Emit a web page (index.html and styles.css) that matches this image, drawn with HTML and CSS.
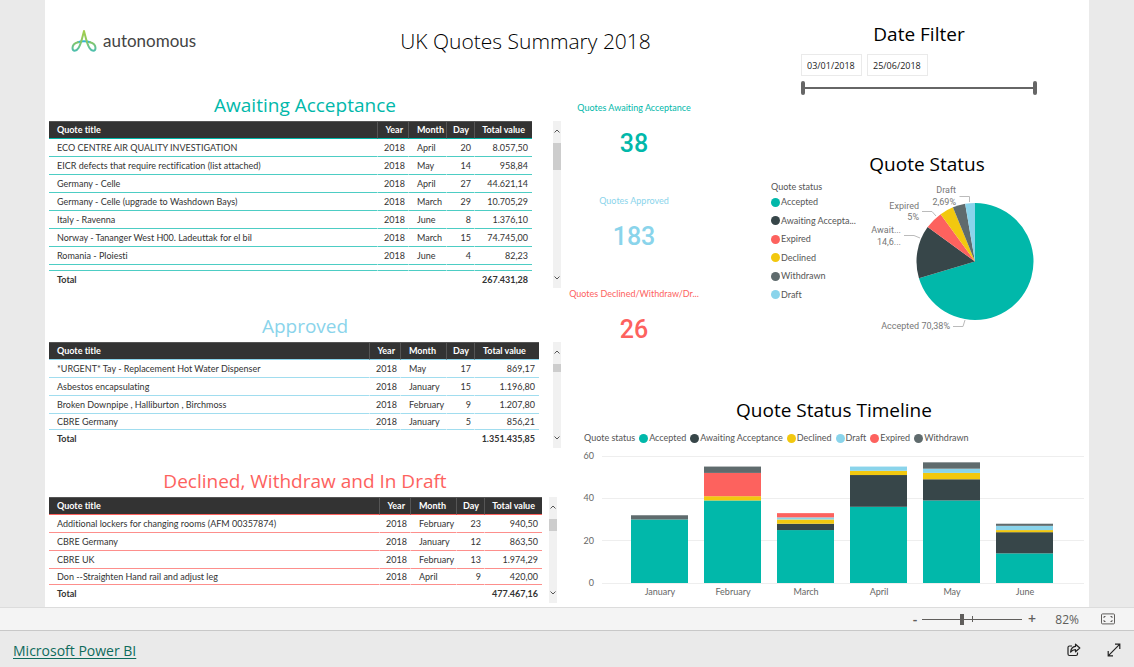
FILE: index.html
```
<!DOCTYPE html>
<html lang="en">
<head>
<meta charset="utf-8">
<title>UK Quotes Summary 2018</title>
<link rel="stylesheet" href="styles.css">
</head>
<body>
<main class="report">
  <header class="masthead">
    <div class="brand">
      <svg class="brand-mark" width="26" height="24" viewBox="0 0 26 24" fill="none" stroke-width="2" stroke-linecap="round" stroke-linejoin="round" aria-hidden="true">
        <defs>
          <linearGradient id="leaf" gradientUnits="userSpaceOnUse" x1="0" y1="1" x2="0" y2="22">
            <stop offset="0" stop-color="#a5cf4c"/><stop offset="0.55" stop-color="#8ac763"/><stop offset="1" stop-color="#4dbfae"/>
          </linearGradient>
        </defs>
        <path d="M7 13.200C10 12 16 12 19 13.200" stroke="#35b6d6"/>
        <path d="M13 2C11.500 7 10.500 14 7.500 19C5.500 22.500 1.500 22.500 1.500 19C1.500 16 4 14 7 13.200M13 2C14.500 7 15.500 14 18.500 19C20.500 22.500 24.500 22.500 24.500 19C24.500 16 22 14 19 13.200" stroke="url(#leaf)"/>
      </svg>
      <span class="brand-name">autonomous</span>
    </div>
    <h1 class="title">UK Quotes Summary 2018</h1>
  </header>

  <section class="filter">
    <h2 class="heading">Date Filter</h2>
    <div class="dates">
      <input class="date" type="text" value="03/01/2018" aria-label="Start date">
      <input class="date" type="text" value="25/06/2018" aria-label="End date">
    </div>
    <div class="span">
      <input class="span-range" type="range" min="0" max="100" value="0" aria-label="Range start">
      <input class="span-range" type="range" min="0" max="100" value="100" aria-label="Range end">
    </div>
  </section>

  <div class="lists">
    <section class="list awaiting">
      <h2 class="heading list-heading">Awaiting Acceptance</h2>
      <div class="list-body">
        <table class="grid">
          <colgroup><col><col class="c31"><col class="c38"><col class="c28"><col class="c58"></colgroup>
          <thead><tr><th>Quote title</th><th class="num">Year</th><th>Month</th><th class="num">Day</th><th class="num">Total value</th></tr></thead>
          <tbody>
            <tr><td>ECO CENTRE AIR QUALITY INVESTIGATION</td><td class="num">2018</td><td>April</td><td class="num">20</td><td class="num">8.057,50</td></tr>
            <tr><td>EICR defects that require rectification (list attached)</td><td class="num">2018</td><td>May</td><td class="num">14</td><td class="num">958,84</td></tr>
            <tr><td>Germany - Celle</td><td class="num">2018</td><td>April</td><td class="num">27</td><td class="num">44.621,14</td></tr>
            <tr><td>Germany - Celle (upgrade to Washdown Bays)</td><td class="num">2018</td><td>March</td><td class="num">29</td><td class="num">10.705,29</td></tr>
            <tr><td>Italy - Ravenna</td><td class="num">2018</td><td>June</td><td class="num">8</td><td class="num">1.376,10</td></tr>
            <tr><td>Norway - Tananger West H00. Ladeuttak for el bil</td><td class="num">2018</td><td>March</td><td class="num">15</td><td class="num">74.745,00</td></tr>
            <tr><td>Romania - Ploiesti</td><td class="num">2018</td><td>June</td><td class="num">4</td><td class="num">82,23</td></tr>
            <tr class="peek"><td></td><td></td><td></td><td></td><td></td></tr>
          </tbody>
          <tfoot><tr><td>Total</td><td class="num" colspan="4">267.431,28</td></tr></tfoot>
        </table>
        <div class="scroll">
          <svg class="arrow" viewBox="0 0 8 6"><path d="M1.500 4.500L4 2L6.500 4.500"/></svg>
          <div class="thumb thumb-tall"></div>
          <svg class="arrow arrow-end" viewBox="0 0 8 6"><path d="M1.500 1.500L4 4L6.500 1.500"/></svg>
        </div>
      </div>
    </section>

    <section class="list approved">
      <h2 class="heading list-heading">Approved</h2>
      <div class="list-body">
        <table class="grid clipped">
          <colgroup><col><col class="c31"><col class="c46"><col class="c28"><col class="c65"></colgroup>
          <thead><tr><th>Quote title</th><th class="num">Year</th><th>Month</th><th class="num">Day</th><th>Total value</th></tr></thead>
          <tbody>
            <tr><td>*URGENT* Tay - Replacement Hot Water Dispenser</td><td class="num">2018</td><td>May</td><td class="num">17</td><td class="num">869,17</td></tr>
            <tr><td>Asbestos encapsulating</td><td class="num">2018</td><td>January</td><td class="num">15</td><td class="num">1.196,80</td></tr>
            <tr><td>Broken Downpipe , Halliburton , Birchmoss</td><td class="num">2018</td><td>February</td><td class="num">9</td><td class="num">1.207,80</td></tr>
            <tr><td>CBRE Germany</td><td class="num">2018</td><td>January</td><td class="num">5</td><td class="num">856,21</td></tr>
          </tbody>
          <tfoot><tr><td>Total</td><td class="num" colspan="4">1.351.435,85</td></tr></tfoot>
        </table>
        <div class="scroll">
          <svg class="arrow" viewBox="0 0 8 6"><path d="M1.500 4.500L4 2L6.500 4.500"/></svg>
          <div class="thumb thumb-short"></div>
          <svg class="arrow arrow-end" viewBox="0 0 8 6"><path d="M1.500 1.500L4 4L6.500 1.500"/></svg>
        </div>
      </div>
    </section>

    <section class="list declined">
      <h2 class="heading list-heading">Declined, Withdraw and In Draft</h2>
      <div class="list-body">
        <table class="grid clipped">
          <colgroup><col><col class="c31"><col class="c46"><col class="c28"><col class="c58"></colgroup>
          <thead><tr><th>Quote title</th><th class="num">Year</th><th>Month</th><th class="num">Day</th><th class="num">Total value</th></tr></thead>
          <tbody>
            <tr><td>Additional lockers for changing rooms (AFM 00357874)</td><td class="num">2018</td><td>February</td><td class="num">23</td><td class="num">940,50</td></tr>
            <tr><td>CBRE Germany</td><td class="num">2018</td><td>January</td><td class="num">12</td><td class="num">863,50</td></tr>
            <tr><td>CBRE UK</td><td class="num">2018</td><td>February</td><td class="num">13</td><td class="num">1.974,29</td></tr>
            <tr><td>Don --Straighten Hand rail and adjust leg</td><td class="num">2018</td><td>April</td><td class="num">9</td><td class="num">420,00</td></tr>
          </tbody>
          <tfoot><tr><td>Total</td><td class="num" colspan="4">477.467,16</td></tr></tfoot>
        </table>
        <div class="scroll">
          <svg class="arrow" viewBox="0 0 8 6"><path d="M1.500 4.500L4 2L6.500 4.500"/></svg>
          <div class="thumb thumb-mid"></div>
          <svg class="arrow arrow-end" viewBox="0 0 8 6"><path d="M1.500 1.500L4 4L6.500 1.500"/></svg>
        </div>
      </div>
    </section>
  </div>

  <section class="kpis">
    <div class="kpi awaiting"><div class="kpi-label">Quotes Awaiting Acceptance</div><div class="kpi-value">38</div></div>
    <div class="kpi approved"><div class="kpi-label">Quotes Approved</div><div class="kpi-value">183</div></div>
    <div class="kpi declined"><div class="kpi-label">Quotes Declined/Withdraw/Dr...</div><div class="kpi-value">26</div></div>
  </section>

  <section class="status">
    <h2 class="heading">Quote Status</h2>
    <div class="status-body">
      <div class="status-legend">
        <div class="legend-title">Quote status</div>
        <ul class="keys keys-column">
          <li class="key"><i class="dot accepted"></i>Accepted</li>
          <li class="key"><i class="dot waiting"></i>Awaiting Accepta...</li>
          <li class="key"><i class="dot expired"></i>Expired</li>
          <li class="key"><i class="dot refused"></i>Declined</li>
          <li class="key"><i class="dot withdrawn"></i>Withdrawn</li>
          <li class="key"><i class="dot draft"></i>Draft</li>
        </ul>
      </div>
      <svg class="pie" width="180" height="155" viewBox="0 0 180 155" role="img" aria-label="Quote status shares">
        <g transform="translate(110 81.500)">
          <path class="fill-accepted" d="M0 0V-58.500A58.500 58.500 0 1 1 -56.050 16.750Z"/>
          <path class="fill-waiting" d="M0 0L-56.050 16.750A58.500 58.500 0 0 1 -47.330 -34.390Z"/>
          <path class="fill-expired" d="M0 0L-47.330 -34.390A58.500 58.500 0 0 1 -34.390 -47.330Z"/>
          <path class="fill-refused" d="M0 0L-34.390 -47.330A58.500 58.500 0 0 1 -22.060 -54.180Z"/>
          <path class="fill-withdrawn" d="M0 0L-22.060 -54.180A58.500 58.500 0 0 1 -9.850 -57.660Z"/>
          <path class="fill-draft" d="M0 0L-9.850 -57.660A58.500 58.500 0 0 1 0 -58.500Z"/>
        </g>
        <g class="leader">
          <path d="M94.500 16.500H104.500V22"/>
          <path d="M57 31.500H67L71 36"/>
          <path d="M39 55.500H49L55 58"/>
          <path d="M88 146.500H98L100 140"/>
        </g>
        <g class="pie-text" text-anchor="end">
          <text x="91" y="13">Draft</text><text x="91" y="25">2,69%</text>
          <text x="54" y="29">Expired</text><text x="54" y="40">5%</text>
          <text x="36" y="53">Await...</text><text x="36" y="65">14,6...</text>
          <text x="85" y="149">Accepted 70,38%</text>
        </g>
      </svg>
    </div>
  </section>

  <section class="timeline">
    <h2 class="heading">Quote Status Timeline</h2>
    <ul class="keys keys-row">
      <li class="key legend-title">Quote status</li>
      <li class="key"><i class="dot accepted"></i>Accepted</li>
      <li class="key"><i class="dot waiting"></i>Awaiting Acceptance</li>
      <li class="key"><i class="dot refused"></i>Declined</li>
      <li class="key"><i class="dot draft"></i>Draft</li>
      <li class="key"><i class="dot expired"></i>Expired</li>
      <li class="key"><i class="dot withdrawn"></i>Withdrawn</li>
    </ul>
    <svg class="bars" viewBox="0 0 524 157" role="img" aria-label="Quotes per month by status">
      <path class="rule" d="M37 6.500H519M37 48.500H519M37 90.500H519M37 133.500H519"/>
      <g class="axis" text-anchor="end">
        <text x="29" y="9">60</text><text x="29" y="51">40</text><text x="29" y="94">20</text><text x="29" y="136">0</text>
      </g>
      <!-- One unit of height is one quote -->
      <g transform="translate(66 133) scale(1 -2.117)">
        <rect class="fill-accepted" x="0" y="0" width="57" height="30"/>
        <rect class="fill-withdrawn" x="0" y="30" width="57" height="2"/>

        <rect class="fill-accepted" x="73" y="0" width="57" height="39"/>
        <rect class="fill-refused" x="73" y="39" width="57" height="2"/>
        <rect class="fill-expired" x="73" y="41" width="57" height="11"/>
        <rect class="fill-withdrawn" x="73" y="52" width="57" height="3"/>

        <rect class="fill-accepted" x="146" y="0" width="57" height="25"/>
        <rect class="fill-waiting" x="146" y="25" width="57" height="3"/>
        <rect class="fill-refused" x="146" y="28" width="57" height="2"/>
        <rect class="fill-draft" x="146" y="30" width="57" height="1"/>
        <rect class="fill-expired" x="146" y="31" width="57" height="2"/>

        <rect class="fill-accepted" x="219" y="0" width="57" height="36"/>
        <rect class="fill-waiting" x="219" y="36" width="57" height="15"/>
        <rect class="fill-refused" x="219" y="51" width="57" height="2"/>
        <rect class="fill-draft" x="219" y="53" width="57" height="2"/>

        <rect class="fill-accepted" x="292" y="0" width="57" height="39"/>
        <rect class="fill-waiting" x="292" y="39" width="57" height="10"/>
        <rect class="fill-refused" x="292" y="49" width="57" height="3"/>
        <rect class="fill-draft" x="292" y="52" width="57" height="2"/>
        <rect class="fill-withdrawn" x="292" y="54" width="57" height="3"/>

        <rect class="fill-accepted" x="365" y="0" width="57" height="14"/>
        <rect class="fill-waiting" x="365" y="14" width="57" height="10"/>
        <rect class="fill-refused" x="365" y="24" width="57" height="1"/>
        <rect class="fill-draft" x="365" y="25" width="57" height="2"/>
        <rect class="fill-withdrawn" x="365" y="27" width="57" height="1"/>
      </g>
      <g class="axis" text-anchor="middle">
        <text x="95" y="145">January</text><text x="168" y="145">February</text><text x="241" y="145">March</text>
        <text x="314" y="145">April</text><text x="387" y="145">May</text><text x="460" y="145">June</text>
      </g>
    </svg>
  </section>
</main>

<div class="zoombar">
  <button class="zoom-step" type="button" aria-label="Zoom out">-</button>
  <input class="zoom-range" type="range" min="0" max="100" value="40" aria-label="Zoom">
  <button class="zoom-step zoom-in" type="button" aria-label="Zoom in">+</button>
  <span class="zoom-value">82%</span>
  <button class="icon-button" type="button" aria-label="Fit to page">
    <svg width="14" height="12" viewBox="0 0 14 12" fill="none" stroke="#605e5c"><rect x="0.500" y="0.900" width="13" height="10" rx="1"/><path d="M3 5V3.500H4.500M9.500 3.500H11V5M11 7V8.500H9.500M4.500 8.500H3V7"/></svg>
  </button>
</div>

<footer class="footer">
  <a class="footer-link" href="#">Microsoft Power BI</a>
  <button class="icon-button" type="button" aria-label="Share">
    <svg width="14" height="14" viewBox="0 0 14 14" fill="none" stroke="#222" stroke-width="1.200" stroke-linejoin="round"><path d="M5 3H2.500Q1 3 1 4.500V11Q1 12.500 2.500 12.500H9Q10.500 12.500 10.500 11V9.500"/><path d="M8.500 1.200L12.800 5L8.500 8.800V6.700C6.500 6.700 5 7.300 3.600 9C4 5.500 5.800 3.600 8.500 3.400Z"/></svg>
  </button>
  <button class="icon-button" type="button" aria-label="Full screen">
    <svg width="14" height="14" viewBox="0 0 14 14" fill="none" stroke="#222" stroke-width="1.200"><path d="M1.200 12.800L12.800 1.200M8 1.200H12.800V6M1.200 8V12.800H6"/></svg>
  </button>
</footer>
</body>
</html>
```
FILE: styles.css
```
* { box-sizing: border-box; }
body {
  margin: 0;
  min-height: 100vh;
  display: flex;
  flex-direction: column;
  background: #eaeaea;
  color: #333;
  font-family: Lato, "Open Sans", sans-serif;
  font-size: 9px;
  font-variant-ligatures: none;
}
h1, h2, ul { margin: 0; padding: 0; font-weight: 400; }
ul { list-style: none; }
button { border: 0; padding: 0; background: none; font: inherit; color: inherit; }

.report {
  flex: 1;
  margin: 0 45px;
  background: #fff;
  display: grid;
  grid-template-columns: 520fr 160fr 364fr;
  grid-template-rows: 92px 304px auto;
  grid-template-areas:
    "masthead masthead filter"
    "lists kpis status"
    "lists timeline timeline";
}
.heading { font-family: "Open Sans", sans-serif; font-size: 19px; line-height: 28px; text-align: center; color: #000; }

.masthead { grid-area: masthead; display: flex; gap: 204px; padding: 26px 0 0 26px; }
.brand { display: flex; gap: 6px; height: 30px; align-items: center; }
.brand-mark { margin-top: -1px; }
.brand-name { font-family: Lato, sans-serif; font-size: 17px; line-height: 20px; color: #444; }
.title { font-family: "Open Sans", sans-serif; font-size: 21px; line-height: 30px; font-weight: 300; color: #000; white-space: nowrap; }

.filter { grid-area: filter; padding: 20px 52px 0 76px; }
.dates { display: flex; gap: 5px; margin-top: 6px; }
.date {
  width: 61px; height: 22px;
  border: 1px solid #eaeaea;
  padding: 0 0 0 5px;
  font: 9px "Open Sans", sans-serif;
  color: #222;
}
.span { position: relative; height: 14px; margin-top: 5px; background: linear-gradient(#666, #666) center / 100% 2px no-repeat; }
.span-range {
  position: absolute; inset: 0;
  width: 100%; height: 14px; margin: 0;
  appearance: none; background: none; pointer-events: none;
}
.span-range::-webkit-slider-thumb {
  appearance: none; width: 4px; height: 14px;
  border-radius: 2px; background: #666; pointer-events: auto;
}

.lists { grid-area: lists; padding: 0 4px; display: flex; flex-direction: column; }
.list-heading { line-height: 26px; margin-bottom: 3px; }
.list.approved { margin-top: 24px; }
.list.declined { margin-top: 20px; }
.list-body { display: flex; justify-content: space-between; }
.awaiting { --tone: #01b8aa; --line: #4dcdc4; }
.approved { --tone: #8ad4eb; --line: #a1ddef; }
.declined { --tone: #fd625e; --line: #fd8f8c; }
.list-heading { color: var(--tone); }
.awaiting .list-body { gap: 21px; }
.approved .list-body { gap: 14px; }
.declined .list-body { gap: 7px; padding-right: 4px; }

.grid { flex: 1; width: 100%; min-width: 0; table-layout: fixed; border-collapse: separate; border-spacing: 0; align-self: flex-start; }
.c28 { width: 28px; }
.c31 { width: 31px; }
.c38 { width: 38px; }
.c46 { width: 46px; }
.c58 { width: 58px; }
.c65 { width: 65px; }
.grid th, .grid td {
  height: 18px;
  padding: 0 0 0 8px;
  line-height: 16px;
  text-align: left;
  font-weight: 400;
  white-space: nowrap;
  border-bottom: 1px solid var(--line);
}
.grid th {
  background: #333; color: #fff; font-weight: 700;
  border-top: 1px solid #555;
  border-bottom-color: var(--tone);
}
.grid th + th { border-left: 1px solid #555; }
.grid td + td { border-left: 1px solid #fff; }
.grid .num { text-align: right; padding-left: 0; padding-right: 3px; }
.grid th.num { padding-right: 5px; }
.grid td.num:last-child { padding-right: 4px; }
.grid th.num:last-child { padding-right: 7px; }
.grid .peek td { height: 6px; }
.grid.clipped tbody tr:last-child td { height: 16px; line-height: 15px; }
.grid tfoot td { border-bottom: 0; font-weight: 700; }

.scroll { flex: none; width: 8px; background: #f1f1f1; display: flex; flex-direction: column; align-items: center; padding: 7px 0; }
.awaiting .scroll { height: 167px; }
.approved .scroll, .declined .scroll { height: 106px; }
.arrow { width: 8px; height: 6px; fill: none; stroke: #555; }
.arrow-end { margin-top: auto; }
.thumb { width: 8px; margin-top: 9px; background: #cdcdcd; }
.thumb-tall { height: 27px; }
.thumb-mid { height: 12px; }
.thumb-short { height: 8px; }

.kpis { grid-area: kpis; padding: 8px 22px 0 0; display: flex; flex-direction: column; gap: 35px; text-align: center; }
.kpi { color: var(--tone); }
.kpi-label { line-height: 16px; white-space: nowrap; }
.kpi-value { margin-top: 14px; font: 500 25px/28px Roboto, sans-serif; }

.status { grid-area: status; padding: 58px 6px 0 46px; }
.status-body { display: flex; gap: 4px; }
.status-legend { width: 90px; padding-top: 1px; color: #555; }
.legend-title { line-height: 15px; }
.keys-column { height: 109px; display: flex; flex-direction: column; justify-content: space-between; }
.key { display: flex; align-items: center; gap: 1px; line-height: 16px; white-space: nowrap; }
.dot { width: 9px; height: 9px; border-radius: 50%; flex: none; }
.accepted { background: #01b8aa; }
.waiting { background: #374649; }
.expired { background: #fd625e; }
.refused { background: #f2c80f; }
.withdrawn { background: #5f6b6d; }
.draft { background: #8ad4eb; }
.fill-accepted { fill: #01b8aa; }
.fill-waiting { fill: #374649; }
.fill-expired { fill: #fd625e; }
.fill-refused { fill: #f2c80f; }
.fill-withdrawn { fill: #5f6b6d; }
.fill-draft { fill: #8ad4eb; }
.pie { flex: none; margin-top: 2px; }
.pie-text { font: 9px Roboto, sans-serif; fill: #777; }
.leader { fill: none; stroke: #bbb; }

.timeline { grid-area: timeline; }
.timeline .heading { padding-left: 14px; }
.keys-row { display: flex; gap: 4px; padding: 6px 0 0 19px; color: #555; }
.bars { display: block; width: 100%; margin-top: 4px; }
.rule { stroke: #eee; }
.axis { fill: #666; }

.zoombar {
  display: flex; align-items: center; justify-content: flex-end;
  height: 24px; padding: 0 19px 0 0;
  background: #f4f4f4; border-top: 1px solid #dcdcdc; border-bottom: 1px solid #c8c8c8;
  color: #605e5c;
  font-family: "Open Sans", sans-serif;
}
.zoom-step { width: 14px; font-size: 14px; font-weight: 600; line-height: 20px; }
.zoom-in { width: 20px; }
.zoom-range {
  width: 100px; height: 12px; margin: 0;
  appearance: none;
  background:
    linear-gradient(#605e5c, #605e5c) 50px center / 1px 6px no-repeat,
    linear-gradient(#605e5c, #605e5c) center / 100% 1px no-repeat;
}
.zoom-range::-webkit-slider-thumb { appearance: none; width: 4px; height: 11px; background: #605e5c; }
.zoom-value { width: 37px; margin-right: 22px; text-align: right; font-size: 12px; }
.icon-button { display: flex; }

.footer { display: flex; align-items: center; height: 36px; padding: 2px 13px 0; gap: 26px; }
.footer-link { margin-right: auto; font-family: "Open Sans", sans-serif; font-size: 14px; color: #0e6b5c; text-underline-offset: 2px; }
```
